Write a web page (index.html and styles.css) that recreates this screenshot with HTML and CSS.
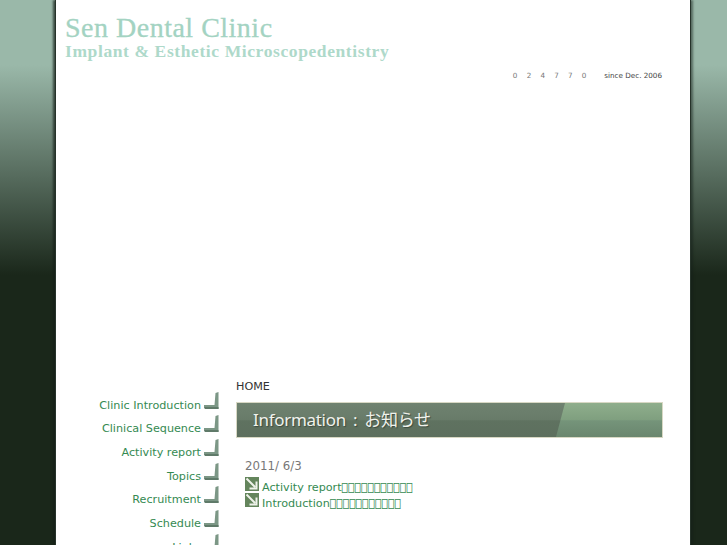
FILE: index.html
```html
<!DOCTYPE html>
<html lang="ja">
<head>
  <meta charset="UTF-8">
  <title>Sen Dental Clinic</title>
  <link rel="stylesheet" href="styles.css">
</head>
<body>

  <div class="page">
    <div class="header">
      <div class="logo-name">Sen Dental Clinic</div>
      <div class="logo-sub">Implant &amp; Esthetic Microscopedentistry</div>
      <div class="counter">
        <span class="digits"><span>0</span><span>2</span><span>4</span><span>7</span><span>7</span><span>0</span></span>
        <span class="since">since Dec. 2006</span>
      </div>
    </div>

    <div class="columns">
      <ul class="nav">
        <li><a>Clinic Introduction</a><svg class="corner" width="15" height="18" viewBox="0 0 15 18"><path d="M11.5 1 L14.5 0 V17 H1 L0 15 V13 H10.5 Z" fill="#7c9786"/><path d="M0 15 H14.5 V17 H1 Z" fill="#5f7a69"/></svg></li>
        <li><a>Clinical Sequence</a><svg class="corner" width="15" height="18" viewBox="0 0 15 18"><path d="M11.5 1 L14.5 0 V17 H1 L0 15 V13 H10.5 Z" fill="#7c9786"/><path d="M0 15 H14.5 V17 H1 Z" fill="#5f7a69"/></svg></li>
        <li><a>Activity report</a><svg class="corner" width="15" height="18" viewBox="0 0 15 18"><path d="M11.5 1 L14.5 0 V17 H1 L0 15 V13 H10.5 Z" fill="#7c9786"/><path d="M0 15 H14.5 V17 H1 Z" fill="#5f7a69"/></svg></li>
        <li><a>Topics</a><svg class="corner" width="15" height="18" viewBox="0 0 15 18"><path d="M11.5 1 L14.5 0 V17 H1 L0 15 V13 H10.5 Z" fill="#7c9786"/><path d="M0 15 H14.5 V17 H1 Z" fill="#5f7a69"/></svg></li>
        <li><a>Recruitment</a><svg class="corner" width="15" height="18" viewBox="0 0 15 18"><path d="M11.5 1 L14.5 0 V17 H1 L0 15 V13 H10.5 Z" fill="#7c9786"/><path d="M0 15 H14.5 V17 H1 Z" fill="#5f7a69"/></svg></li>
        <li><a>Schedule</a><svg class="corner" width="15" height="18" viewBox="0 0 15 18"><path d="M11.5 1 L14.5 0 V17 H1 L0 15 V13 H10.5 Z" fill="#7c9786"/><path d="M0 15 H14.5 V17 H1 Z" fill="#5f7a69"/></svg></li>
        <li><a>Links</a><svg class="corner" width="15" height="18" viewBox="0 0 15 18"><path d="M11.5 1 L14.5 0 V17 H1 L0 15 V13 H10.5 Z" fill="#7c9786"/><path d="M0 15 H14.5 V17 H1 Z" fill="#5f7a69"/></svg></li>
      </ul>

      <div class="main">
        <div class="crumb">HOME</div>
        <div class="banner"><span class="banner-text">Information : お知らせ</span></div>
        <div class="news">
          <div class="news-date">2011/ 6/3</div>
          <div class="news-item">
            <svg class="arrow" width="14" height="14" viewBox="0 0 14 14"><rect width="14" height="14" fill="#64855c"/><path d="M1.5 1.5 L10 10 M11.5 4.5 V11.5 H4.5" stroke="#eef2ea" stroke-width="2" fill="none"/></svg>
            <a>Activity report<span class="tofu">&#xE000;&#xE000;&#xE000;&#xE000;&#xE000;&#xE000;&#xE000;&#xE000;&#xE000;&#xE000;&#xE000;</span></a>
          </div>
          <div class="news-item">
            <svg class="arrow" width="14" height="14" viewBox="0 0 14 14"><rect width="14" height="14" fill="#64855c"/><path d="M1.5 1.5 L10 10 M11.5 4.5 V11.5 H4.5" stroke="#eef2ea" stroke-width="2" fill="none"/></svg>
            <a>Introduction<span class="tofu">&#xE000;&#xE000;&#xE000;&#xE000;&#xE000;&#xE000;&#xE000;&#xE000;&#xE000;&#xE000;&#xE000;</span></a>
          </div>
        </div>
      </div>
    </div>
  </div>

</body>
</html>
```

FILE: styles.css
```css
html, body {
  height: 100%;
  margin: 0;
  overflow: hidden;
}

body {
  font-family: "DejaVu Sans", sans-serif;
  background: linear-gradient(#9ab8a9 0, #9ab8a9 65px, #1a271a 275px, #1a271a 100%);
}

.page {
  width: 634px;
  height: 100%;
  margin-left: 56px;
  background-color: #fff;
  box-shadow: -1px 0 0 #26332a, -3px 0 2px rgba(20, 30, 24, 0.7), 1px 0 0 #26332a, 3px 0 2px rgba(20, 30, 24, 0.5);
}

.header {
  height: 376px;
  padding: 13px 28px 0 9px;
  box-sizing: border-box;
}

.logo-name {
  font-family: "Liberation Serif", serif;
  font-size: 28px;
  line-height: 30px;
  letter-spacing: 0.5px;
  color: #a3d3c2;
  -webkit-text-stroke: 0.3px #a3d3c2;
}

.logo-sub {
  font-family: "Liberation Serif", serif;
  font-weight: bold;
  font-size: 17.5px;
  line-height: 16px;
  letter-spacing: 0.6px;
  color: #aed9ca;
}

.counter {
  display: flex;
  justify-content: flex-end;
  margin-top: 11px;
  font-size: 7.2px;
  line-height: 12px;
}

.digits {
  display: flex;
  gap: 9.2px;
  margin-right: 18px;
  color: #777;
}

.since {
  color: #444;
}

.columns {
  display: flex;
}

.nav {
  width: 163px;
  margin: 10px 0 0;
  padding: 0;
  list-style: none;
}

.nav li {
  display: flex;
  justify-content: flex-end;
  align-items: flex-end;
  height: 23.67px;
  font-size: 11.2px;
  color: #358a52;
}

.nav a {
  margin-right: 3px;
  margin-bottom: -3px;
  line-height: 14px;
}

.corner {
  flex: none;
}

.main {
  width: 427px;
  margin-left: 17px;
}

.crumb {
  padding-top: 1px;
  font-size: 11.2px;
  line-height: 20px;
  color: #333;
}

.banner {
  position: relative;
  height: 36px;
  margin-top: 5px;
  box-sizing: border-box;
  padding-left: 16px;
  border: 1px solid #d8d8c4;
  background: linear-gradient(#6f8270 0, #687b69 50%, #5f7260 52%, #5d6f5e 100%);
  overflow: hidden;
}

.banner::after {
  content: "";
  position: absolute;
  top: 0;
  right: 0;
  bottom: 0;
  width: 106px;
  background: linear-gradient(#8fae8c 0, #7f9f7f 50%, #75947a 52%, #6a866e 100%);
  clip-path: polygon(9px 0, 100% 0, 100% 100%, 0 100%);
}

.banner-text {
  font-family: "Noto Sans", "Noto Sans CJK JP", sans-serif;
  font-size: 17px;
  line-height: 34px;
  letter-spacing: -0.3px;
  word-spacing: 3px;
  color: #f0f2ec;
  text-shadow: 1px 1px 1px #3c4a3e;
}

.news {
  padding: 20px 0 0 9px;
}

.news-date {
  font-size: 11.8px;
  line-height: 16px;
  color: #777;
  margin-bottom: 3px;
}

.news-item {
  display: flex;
  align-items: flex-start;
  gap: 3px;
  height: 16px;
  font-size: 11.2px;
  line-height: 21px;
  color: #358a52;
}

.tofu {
  letter-spacing: -0.25px;
}

.arrow {
  flex: none;
}
```
